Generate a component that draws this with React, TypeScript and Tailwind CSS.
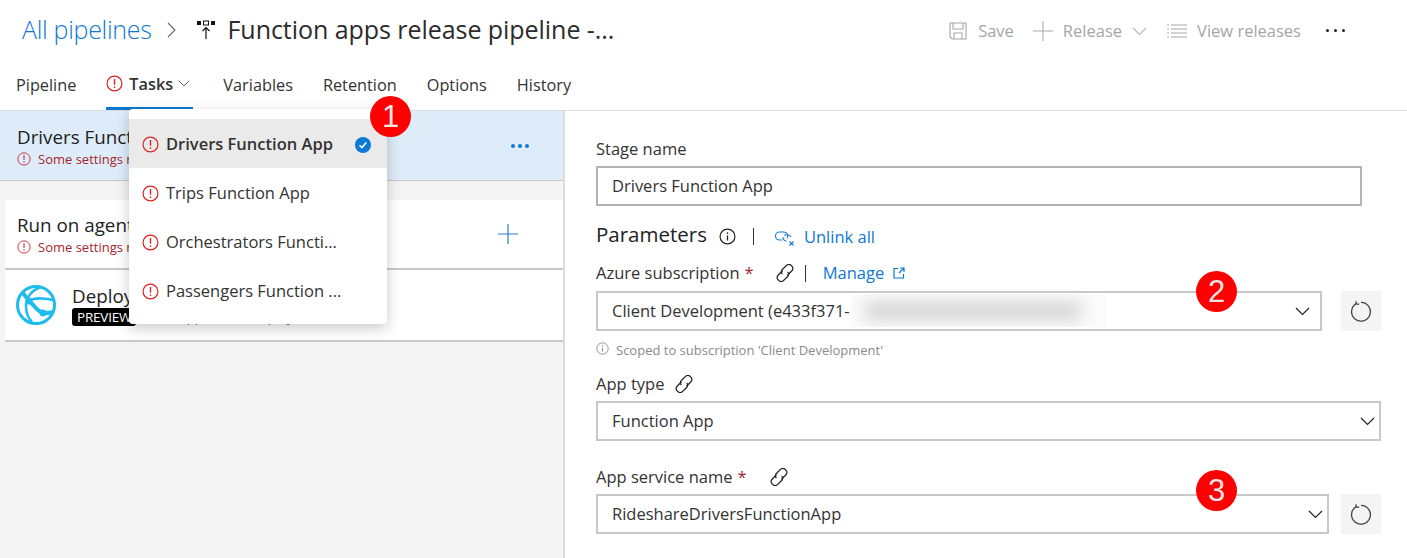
import React from 'react';

const FONT = "font-['Open_Sans',sans-serif]";

const ErrorIcon = ({ size = 16, className = 'text-[#e02020]' }: { size?: number; className?: string }) => (
    <svg width={size} height={size} viewBox="0 0 16 16" fill="none" className={`shrink-0 ${className}`}>
        <circle cx="8" cy="8" r="7" stroke="currentColor" strokeWidth="1.1" />
        <path d="M8 3.8v5.4" stroke="currentColor" strokeWidth="1.3" />
        <circle cx="8" cy="11.4" r="0.8" fill="currentColor" />
    </svg>
);

const InfoIcon = ({ size = 16, className = 'text-[#222]' }: { size?: number; className?: string }) => (
    <svg width={size} height={size} viewBox="0 0 16 16" fill="none" className={`shrink-0 ${className}`}>
        <circle cx="8" cy="8" r="7" stroke="currentColor" strokeWidth="1.1" />
        <path d="M8 7v4.8" stroke="currentColor" strokeWidth="1.2" />
        <circle cx="8" cy="4.8" r="0.8" fill="currentColor" />
    </svg>
);

const LinkIcon = ({ className = '' }: { className?: string }) => (
    <svg width="18" height="18" viewBox="2.5 2.5 13 13" fill="none" stroke="#222" strokeWidth="0.9" className={`shrink-0 ${className}`}>
        <path d="M7.2 7.4 4 10.6a2.3 2.3 0 0 0 0 3.3l.6.6a2.3 2.3 0 0 0 3.3 0l3-3a2.3 2.3 0 0 0 0-3.3" />
        <path d="M10.8 10.6 14 7.4a2.3 2.3 0 0 0 0-3.3l-.6-.6a2.3 2.3 0 0 0-3.3 0l-3 3a2.3 2.3 0 0 0 0 3.3" />
    </svg>
);

const Chevron = ({ className = '', stroke = '#222' }: { className?: string; stroke?: string }) => (
    <svg width="15" height="9" viewBox="0 0 15 9" fill="none" stroke={stroke} strokeWidth="1.2" className={`shrink-0 ${className}`}>
        <path d="M1 1l6.5 6.5L14 1" />
    </svg>
);

const RefreshButton = () => (
    <div className="w-[40px] h-10 bg-[#f4f4f4] flex items-center justify-center shrink-0">
        <svg width="22" height="22" viewBox="0 0 22 22" fill="none" stroke="#444" strokeWidth="1.3">
            <path d="M6.2 3.6a9.4 9.4 0 1 0 4.8-1.3" />
            <path d="M6 1.2v3h3.2" />
        </svg>
    </div>
);

const Badge = ({ n, className }: { n: number; className: string }) => (
    <div className={`absolute w-[41px] h-[41px] rounded-full bg-[#fe0000] text-[#f0e4e4] text-[31px] leading-[41px] text-center font-['Liberation_Sans',sans-serif] ${className}`}>
        {n}
    </div>
);

const SelectBox = ({ value, className = '' }: { value: string; className?: string }) => (
    <div className={`h-10 border-2 border-[#c8c8c8] bg-white flex items-center justify-between pl-[14px] text-[16.5px] text-[#333] ${className}`}>
        <span>{value}</span>
        <Chevron />
    </div>
);

const menuItems = ['Drivers Function App', 'Trips Function App', 'Orchestrators Functi...', 'Passengers Function ...'];

export default function App() {
    return (
        <div className={`relative w-[1407px] h-[558px] overflow-hidden bg-white ${FONT}`}>
            {/* header */}
            <div className="h-[111px] border-b border-[#dcdcdc]">
                <div className="h-[60px] flex items-center pl-[22px] pr-[62px]">
                    <span className="text-[25px] font-light text-[#0f78d4] tracking-[-0.3px]">All pipelines</span>
                    <svg width="10" height="16" viewBox="0 0 10 16" fill="none" stroke="#666" strokeWidth="1.1" className="ml-[15px]">
                        <path d="M1 1l7 7-7 7" />
                    </svg>
                    <svg width="20" height="22" viewBox="0 0 20 22" className="ml-[19px]">
                        <rect x="1" y="2" width="4" height="4" fill="#111" />
                        <rect x="7.5" y="2" width="5" height="4" fill="none" stroke="#111" />
                        <rect x="15" y="2" width="4" height="4" fill="#111" />
                        <path d="M10 20V9M6.5 12 10 8.5l3.5 3.5" fill="none" stroke="#111" strokeWidth="1.2" />
                    </svg>
                    <span className="ml-[12px] text-[25px] text-[#2b2b2b] tracking-[-0.05px]">Function apps release pipeline -...</span>
                    <div className="ml-auto mt-[2px] flex items-center text-[16.5px] text-[#a6a6a6]">
                        <svg width="18" height="18" viewBox="0 0 18 18" fill="none" stroke="#a6a6a6" strokeWidth="1.1">
                            <path d="M1 1h16v16H3l-2-2z" />
                            <path d="M4 1v6h10V1M5 17v-6h8v6" />
                        </svg>
                        <span className="ml-[11px]">Save</span>
                        <svg width="20" height="20" viewBox="0 0 20 20" fill="none" stroke="#a6a6a6" className="ml-[19px]">
                            <path d="M10 0v20M0 10h20" />
                        </svg>
                        <span className="ml-[10px]">Release</span>
                        <Chevron stroke="#b8b8b8" className="ml-[10px]" />
                        <svg width="20" height="14" viewBox="0 0 20 14" fill="none" stroke="#a6a6a6" className="ml-[20px]">
                            <path d="M4 1h16M4 5h16M4 9h16M4 13h16M0 1h2M0 5h2M0 9h2M0 13h2" />
                        </svg>
                        <span className="ml-[10px]">View releases</span>
                        <span className="ml-[25px] -mt-[2px] flex gap-[5px]">
                            <i className="w-[3px] h-[3px] rounded-full bg-[#222]" />
                            <i className="w-[3px] h-[3px] rounded-full bg-[#222]" />
                            <i className="w-[3px] h-[3px] rounded-full bg-[#222]" />
                        </span>
                    </div>
                </div>
                <div className="h-[50px] flex items-start pl-[16px] text-[16.3px] text-[#333]">
                    <span className="leading-[50px]">Pipeline</span>
                    <div className="ml-[30px] h-[50px] w-[87px] border-b-[3px] border-[#0f78d4] flex items-center">
                        <ErrorIcon size={17} className="text-[#e02020] -mt-[1px]" />
                        <span className="ml-[6px] mt-[2px] font-semibold">Tasks</span>
                        <Chevron className="ml-[5px] w-[12px]" stroke="#555" />
                    </div>
                    <span className="ml-[30px] leading-[50px]">Variables</span>
                    <span className="ml-[30px] leading-[50px]">Retention</span>
                    <span className="ml-[30px] leading-[50px]">Options</span>
                    <span className="ml-[30px] leading-[50px]">History</span>
                </div>
            </div>

            <div className="flex h-[447px]">
                {/* left column */}
                <div className="w-[565px] shrink-0 bg-[#f4f4f4] border-r-2 border-[#dcdcdc]">
                    <div className="h-[70px] bg-[#deecf9] border-b border-[#c8c8c8] pl-[17px] pr-[34px] flex items-center justify-between">
                        <div>
                            <div className="text-[18.8px] leading-[26px] text-[#222]">Drivers Function App</div>
                            <div className="flex items-center text-[13px] leading-[18px] text-[#a4262c]">
                                <ErrorIcon size={14} className="text-[#c8343c]" />
                                <span className="ml-[7px]">Some settings need attention</span>
                            </div>
                        </div>
                        <span className="flex gap-[3px]">
                            <i className="w-[4px] h-[4px] rounded-full bg-[#0f78d4]" />
                            <i className="w-[4px] h-[4px] rounded-full bg-[#0f78d4]" />
                            <i className="w-[4px] h-[4px] rounded-full bg-[#0f78d4]" />
                        </span>
                    </div>
                    <div className="mt-[19px] ml-[5px] bg-white">
                        <div className="h-[70px] border-b-2 border-[#c8c8c8] pl-[12px] pr-[44px] flex items-center justify-between">
                            <div>
                                <div className="text-[18.8px] leading-[26px] text-[#222]">Run on agent</div>
                                <div className="flex items-center text-[13px] leading-[18px] text-[#a4262c]">
                                    <ErrorIcon size={14} className="text-[#c8343c]" />
                                    <span className="ml-[7px]">Some settings need attention</span>
                                </div>
                            </div>
                            <svg width="22" height="22" viewBox="0 0 22 22" fill="none" stroke="#2a7bc8" strokeWidth="1.2">
                                <path d="M11 1v20M1 11h20" />
                            </svg>
                        </div>
                        <div className="h-[72px] border-b-2 border-[#c8c8c8] pl-[10px] flex items-center">
                            <svg width="42" height="42" viewBox="0 0 42 42" fill="none" stroke="#1ebbee" className="shrink-0">
                                <circle cx="21" cy="21" r="18.5" strokeWidth="3" />
                                <path d="M8 9c5 8 9 10 12 14s8 8 18 5" strokeWidth="4" />
                                <path d="M26 3c-9 3-15 10-15 19 0 7 2 12 6 16" strokeWidth="2.5" />
                                <path d="M14 17c6-4 14-3 24-1" strokeWidth="2.5" />
                                <circle cx="14" cy="17" r="3.5" fill="#1ebbee" stroke="none" />
                                <circle cx="28" cy="29" r="3.5" fill="#1ebbee" stroke="none" />
                            </svg>
                            <div className="ml-[15px]">
                                <div className="text-[18.8px] leading-[24px] text-[#222]">Deploy Azure Function App</div>
                                <div className="flex items-center">
                                    <span className="bg-black text-white text-[13.5px] leading-[18px] px-[5px] rounded-[3px] tracking-[-0.2px]">PREVIEW</span>
                                    <span className="ml-[4px] text-[13px] leading-[18px] text-[#666]">Azure App Service deploy</span>
                                </div>
                            </div>
                        </div>
                    </div>
                </div>

                {/* right column */}
                <div className="flex-1 pl-[31px] pr-[26px] text-[#333]">
                    <div className="mt-[26px] text-[16.5px] leading-[24px]">Stage name</div>
                    <div className="mt-[5px] mr-[19px] h-10 border-2 border-[#b4b4b4] flex items-center pl-[14px] pt-[1px] text-[16.5px]">Drivers Function App</div>

                    <div className="mt-[12px] h-[34px] flex items-center">
                        <span className="-mt-[2px] text-[20.5px] text-[#222]">Parameters</span>
                        <InfoIcon size={17} className="ml-[12px] mt-[3px] text-[#222]" />
                        <span className="ml-[17px] mt-[3px] w-px h-[17px] bg-[#333]" />
                        <svg width="22" height="18" viewBox="0 0 22 18" fill="none" stroke="#0f78d4" strokeWidth="1.1" className="ml-[20px] mt-[5px]">
                            <path d="M8 11H5.5a4 4 0 0 1 0-8H10a4 4 0 0 1 3 6.5" />
                            <path d="M10 6h4a3.5 3.5 0 0 1 3 2M9 8a3.5 3.5 0 0 0 3.5 4" />
                            <path d="M15.5 12.5l4 4M19.5 12.5l-4 4" />
                        </svg>
                        <span className="ml-[8px] mt-[5px] text-[16.5px] text-[#0f78d4]">Unlink all</span>
                    </div>

                    <div className="mt-[9px] h-[24px] flex items-center text-[16.5px]">
                        <span>Azure subscription</span>
                        <span className="ml-[5px] text-[#a4262c]">*</span>
                        <LinkIcon className="ml-[22px]" />
                        <span className="ml-[11px] w-px h-[17px] bg-[#333]" />
                        <span className="ml-[17px] text-[#0f78d4]">Manage</span>
                        <svg width="12" height="12" viewBox="0 0 12 12" fill="none" stroke="#0f78d4" strokeWidth="1.2" className="ml-[9px]">
                            <path d="M5 1.5H1v9.5h9.5V7M6 6l4.5-4.5M7 1h4v4" />
                        </svg>
                    </div>
                    <div className="mt-[6px] flex justify-between">
                        <div className="relative w-[726px]">
                            <SelectBox value="Client Development (e433f371-" className="pr-[10px]" />
                            {/* masked part of the subscription id */}
                            <div className="absolute left-[255px] top-[3px] w-[255px] h-[33px] bg-[#fbfbfb] overflow-hidden">
                                <div className="mt-[8px] ml-[14px] w-[216px] h-[18px] bg-[#d4d4d4] blur-[8px]" />
                            </div>
                        </div>
                        <RefreshButton />
                    </div>
                    <div className="mt-[10px] flex items-center text-[13px] leading-[18px] text-[#8a8a8a]">
                        <InfoIcon size={13} className="text-[#8a8a8a] -mt-[3px]" />
                        <span className="ml-[7px]">Scoped to subscription 'Client Development'</span>
                    </div>

                    <div className="mt-[13px] h-[24px] flex items-center text-[16.5px]">
                        <span>App type</span>
                        <LinkIcon className="ml-[11px]" />
                    </div>
                    <SelectBox value="Function App" className="mt-[5px] pr-[4px]" />

                    <div className="mt-[24px] h-[24px] flex items-center text-[16.5px]">
                        <span>App service name</span>
                        <span className="ml-[5px] text-[#a4262c]">*</span>
                        <LinkIcon className="ml-[23px]" />
                    </div>
                    <div className="mt-[5px] flex justify-between">
                        <SelectBox value="RideshareDriversFunctionApp" className="w-[733px] pr-[4px]" />
                        <RefreshButton />
                    </div>
                </div>
            </div>

            {/* tasks dropdown */}
            <div className="absolute left-[129px] top-[109px] w-[258px] h-[215px] bg-white rounded-[4px] shadow-[0_4px_14px_rgba(0,0,0,0.22)] pt-[10px]">
                {menuItems.map((item, i) => (
                    <div key={item} className={`h-[49px] pl-[13px] pt-[2px] flex items-center text-[16.5px] text-[#333] ${i === 0 ? 'bg-[#eaeaea] font-semibold text-[#222]' : ''}`}>
                        <ErrorIcon size={17} />
                        <span className="ml-[7px]">{item}</span>
                        {i === 0 && (
                            <svg width="16" height="16" viewBox="0 0 16 16" className="ml-auto mr-[16px]">
                                <circle cx="8" cy="8" r="8" fill="#0f78d4" />
                                <path d="M4.5 8.3l2.4 2.3 4.4-5" fill="none" stroke="#fff" strokeWidth="1.5" />
                            </svg>
                        )}
                    </div>
                ))}
            </div>

            <Badge n={1} className="left-[370px] top-[96px]" />
            <Badge n={2} className="left-[1196px] top-[271px]" />
            <Badge n={3} className="left-[1196px] top-[470px]" />
        </div>
    );
}
